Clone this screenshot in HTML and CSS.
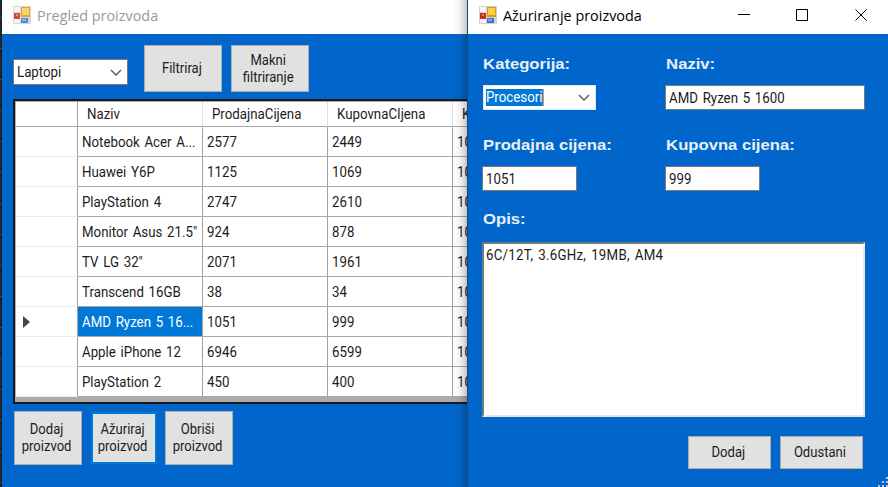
FILE: index.html
```html
<!DOCTYPE html>
<html lang="hr">
<head>
<meta charset="utf-8">
<title>Pregled proizvoda</title>
<link rel="stylesheet" href="styles.css">
</head>
<body>
<div class="desktop">
<div class="edge"></div>
<section class="window list">
  <header class="titlebar"><svg class="app" width="18" height="19" viewBox="0 0 18 19"><path fill="#d2d2d2" d="M0 0h18v18H0z"/><path fill="#f4f4f4" d="M1 1h6v5H1zM1 13h6v4H1z"/><path fill="#c62d20" d="M1 7h6v6H1z"/><path fill="#e77768" d="M3 8h2v2H3z"/><path fill="#d99b10" d="M8 1h9v10H8z"/><path fill="#f8cf45" d="M9 2h7v7H9z"/><path fill="#3b75d1" d="M8 12h7v5H8z"/><path fill="#79a9f1" d="M9 13h4v2H9z"/></svg><span class="caption">Pregled proizvoda</span></header>
  <div class="filters">
    <div class="combo"><span class="t">Laptopi</span><svg width="12" height="8" viewBox="0 0 12 8"><path d="M1 1l5 5 5-5"/></svg></div>
    <button class="b1"><span class="t">Filtriraj</span></button>
    <button class="b2"><span class="t">Makni<br>filtriranje</span></button>
  </div>
  <div class="grid">
    <div class="row head"><i></i><span><b class="t">Naziv</b></span><span><b class="t">ProdajnaCijena</b></span><span><b class="t">KupovnaCIjena</b></span><span><b class="t">Kolicina</b></span></div>
    <div class="row"><i></i><span><b class="t">Notebook Acer A...</b></span><span><b class="t">2577</b></span><span><b class="t">2449</b></span><span><b class="t">10</b></span></div>
    <div class="row"><i></i><span><b class="t">Huawei Y6P</b></span><span><b class="t">1125</b></span><span><b class="t">1069</b></span><span><b class="t">10</b></span></div>
    <div class="row"><i></i><span><b class="t">PlayStation 4</b></span><span><b class="t">2747</b></span><span><b class="t">2610</b></span><span><b class="t">10</b></span></div>
    <div class="row"><i></i><span><b class="t">Monitor Asus 21.5"</b></span><span><b class="t">924</b></span><span><b class="t">878</b></span><span><b class="t">10</b></span></div>
    <div class="row"><i></i><span><b class="t">TV LG 32"</b></span><span><b class="t">2071</b></span><span><b class="t">1961</b></span><span><b class="t">10</b></span></div>
    <div class="row"><i></i><span><b class="t">Transcend 16GB</b></span><span><b class="t">38</b></span><span><b class="t">34</b></span><span><b class="t">10</b></span></div>
    <div class="row"><i><svg width="7" height="12" viewBox="0 0 7 12"><path fill="#444" d="M0 0l7 6-7 6z"/></svg></i><span class="sel"><b class="t">AMD Ryzen 5 16...</b></span><span><b class="t">1051</b></span><span><b class="t">999</b></span><span><b class="t">10</b></span></div>
    <div class="row"><i></i><span><b class="t">Apple iPhone 12</b></span><span><b class="t">6946</b></span><span><b class="t">6599</b></span><span><b class="t">10</b></span></div>
    <div class="row"><i></i><span><b class="t">PlayStation 2</b></span><span><b class="t">450</b></span><span><b class="t">400</b></span><span><b class="t">10</b></span></div>
  </div>
  <div class="actions">
    <button><span class="t">Dodaj<br>proizvod</span></button>
    <button class="focus"><span class="t">Ažuriraj<br>proizvod</span></button>
    <button><span class="t">Obriši<br>proizvod</span></button>
  </div>
  <div class="shade"></div>
</section>
<section class="window dialog">
  <header class="titlebar"><svg class="app" width="18" height="19" viewBox="0 0 18 19"><path fill="#d2d2d2" d="M0 0h18v18H0z"/><path fill="#f4f4f4" d="M1 1h6v5H1zM1 13h6v4H1z"/><path fill="#c62d20" d="M1 7h6v6H1z"/><path fill="#e77768" d="M3 8h2v2H3z"/><path fill="#d99b10" d="M8 1h9v10H8z"/><path fill="#f8cf45" d="M9 2h7v7H9z"/><path fill="#3b75d1" d="M8 12h7v5H8z"/><path fill="#79a9f1" d="M9 13h4v2H9z"/></svg><span class="caption">Ažuriranje proizvoda</span>
    <svg class="controls" width="130" height="12" viewBox="0 0 130 12" fill="none" stroke="#000"><path d="M0 5.5h12M58.500.5h11v11h-11zM117.500.5l11 11m0-11l-11 11"/></svg></header>
  <div class="fields">
    <div><label>Kategorija:</label><div class="combo active"><span class="t">Procesori</span><svg width="12" height="8" viewBox="0 0 12 8"><path d="M1 1l5 5 5-5"/></svg></div></div>
    <div><label>Naziv:</label><div class="input wide"><span class="t">AMD Ryzen 5 1600</span></div></div>
    <div><label>Prodajna cijena:</label><div class="input"><span class="t">1051</span></div></div>
    <div><label>Kupovna cijena:</label><div class="input"><span class="t">999</span></div></div>
  </div>
  <label class="desc">Opis:</label>
  <div class="area"><span class="t">6C/12T, 3.6GHz, 19MB, AM4</span></div>
  <div class="confirm"><button><span class="t">Dodaj</span></button><button><span class="t">Odustani</span></button></div>
  <svg class="grip" width="10" height="10" viewBox="0 0 10 10" fill="#bdc6d0"><path d="M8 0h2v2H8zM4 4h2v2H4zM8 4h2v2H8zM0 8h2v2H0zM4 8h2v2H4zM8 8h2v2H8z"/></svg>
</section>
</div>
</body>
</html>
```
FILE: styles.css
```css
* { box-sizing: border-box; }
body { margin: 0; overflow: hidden; font: 15px/16px Roboto, sans-serif; color: #1c1c1c; }
.desktop { display: flex; width: 888px; height: 487px; background: #0066cc; }
.edge { width: 2px; background: repeating-linear-gradient(#202428 0 17px, #24505c 17px 18px, #202428 18px 31px); }
.window { position: relative; height: 487px; overflow: hidden; background: #0066cc; }
.list { width: 465px; }
.dialog { width: 421px; border-left: 1px solid #154a80; }
.titlebar { display: flex; align-items: center; height: 34px; padding: 0 0 4px 11px; background: #fff; font: 15px/20px "Open Sans", sans-serif; color: #000; white-space: nowrap; }
.list .titlebar { color: #999; }
.caption { transform: scaleX(.96); transform-origin: left; }
.app { width: 18px; margin-right: 6px; flex: none; }
.list .app { opacity: .85; }
.controls { margin-left: auto; margin-right: 20px; }
.t { display: inline-block; font-weight: 400; white-space: nowrap; word-spacing: 1.6px; transform: scaleX(.885); transform-origin: left; }
button { display: flex; align-items: center; justify-content: center; padding: 0 3px 0 0; border: 1px solid #adadad; background: #e1e1e1; font: inherit; line-height: 17px; color: inherit; text-align: center; flex: none; }
button .t { transform: scaleX(.87); transform-origin: center; }
.filters { display: flex; height: 65px; padding: 11px 0 0 11px; }
.combo { display: flex; align-items: center; justify-content: space-between; width: 115px; height: 26px; border: 1px solid #7a7a7a; background: #fff; padding: 0 5px 0 3px; }
.combo svg { fill: none; stroke: #555; stroke-width: 1.4; margin-top: 1px; }
.filters .combo { margin-top: 14px; }
.b1, .b2 { width: 78px; height: 47px; }
.b1 { margin-left: 16px; }
.b2 { margin-left: 9px; }
.grid { width: 480px; height: 305px; margin-left: 11px; border: 2px solid #151a22; background: #ababab; padding: 1px 0 0 1px; }
.row { display: grid; grid-template-columns: 62px repeat(4, 125px); height: 30px; }
.row.head { height: 25px; }
.row > * { border-right: 1px solid #a0a0a0; border-bottom: 1px solid #a8a8a8; background: #fff; overflow: hidden; }
.row i { display: flex; align-items: center; padding-left: 7px; border-bottom-color: #ebebeb; }
.row span { padding: 7px 0 0 4px; }
.row.head span { padding: 4px 0 0 9px; border-right-color: #e0e0e0; }
.row.head i { border-bottom-color: #a8a8a8; }
.row .sel { background: #0078d7; color: #fff; }
.actions { display: flex; padding: 7px 0 0 12px; }
.actions button { width: 68px; height: 54px; margin-right: 7px; }
.actions .focus { width: 66px; height: 52px; margin: 1px 8px 0 2px; border: 2px solid #0078d7; }
.shade { position: absolute; top: 0; right: 0; width: 14px; height: 487px; background: linear-gradient(90deg, transparent, rgba(0, 0, 0, .05) 50%, rgba(0, 0, 0, .22)); }
.fields { display: grid; grid-template-columns: 183px 200px; grid-template-rows: 81px 79px; padding: 20px 0 0 14px; }
label { display: block; height: 20px; width: max-content; font: bold 15px/20px "Liberation Sans", sans-serif; color: #eaf0f8; transform: scaleX(1.11); transform-origin: left; padding-left: 1px; }
.fields .combo { width: 113px; height: 25px; margin: 11px 0 0 1px; padding: 0 5px 1px 2px; border-color: #d8ecff; }
.active .t { background: #0078d7; color: #fff; border-right: 1px solid #e18a55; height: 17px; }
.input { width: 95px; height: 25px; margin-top: 11px; padding: 4px 3px; background: #fff; border: 1px solid #7a7a7a; }
.wide { width: 200px; }
.desc { margin: -5px 0 0 14px; }
.area { width: 383px; height: 175px; margin: 13px 0 0 14px; padding: 3px 2px; background: #fff; border: 2px solid; border-color: #777 #e8e8e8 #e8e8e8 #777; }
.area .t { letter-spacing: .28px; }
.confirm { display: flex; gap: 9px; padding: 19px 0 0 220px; }
.confirm button { width: 83px; height: 33px; }
.grip { position: absolute; right: 0; bottom: 0; }
```
